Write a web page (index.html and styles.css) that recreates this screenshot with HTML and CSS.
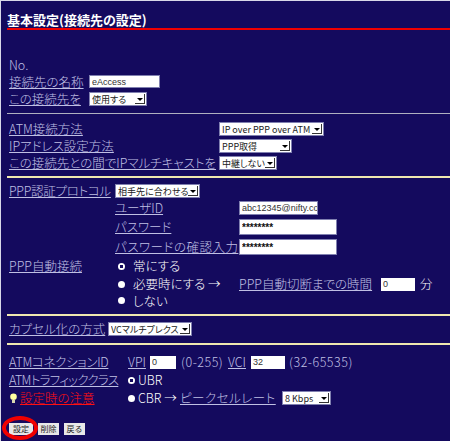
FILE: index.html
```html
<!DOCTYPE html>
<html lang="ja">
<head>
    <meta charset="UTF-8">
    <title>基本設定</title>
    <link rel="stylesheet" href="styles.css">
</head>
<body>
<form class="page">
    <h1 class="title">基本設定(接続先の設定)</h1>
    <div class="line-red"></div>

    <div class="block-no">
        <div class="row"><span class="plain">No.</span></div>
        <div class="row">
            <a class="label w-name">接続先の名称</a>
            <input class="field f-name" type="text" value="eAccess">
        </div>
        <div class="row">
            <a class="label w-name">この接続先を</a>
            <span class="sel s-use"><select><option>使用する</option></select><i class="arrow"></i></span>
        </div>
    </div>
    <div class="line-gray"></div>

    <div class="block-atm">
        <div class="row">
            <a class="label w-atm">ATM接続方法</a>
            <span class="sel s-atm"><select><option>IP over PPP over ATM</option></select><i class="arrow"></i></span>
        </div>
        <div class="row">
            <a class="label w-atm">IPアドレス設定方法</a>
            <span class="sel s-ip"><select><option>PPP取得</option></select><i class="arrow"></i></span>
        </div>
        <div class="row">
            <a class="label w-atm">この接続先との間でIPマルチキャストを</a>
            <span class="sel s-multi"><select><option>中継しない</option></select><i class="arrow"></i></span>
        </div>
    </div>
    <div class="line-cream"></div>

    <div class="block-ppp">
        <div class="row r-16">
            <a class="label w-ppp tight">PPP認証プロトコル</a>
            <span class="sel s-auth"><select><option>相手先に合わせる</option></select><i class="arrow"></i></span>
        </div>
        <div class="row r-18 in-ppp">
            <a class="label w-user">ユーザID</a>
            <input class="field f-user" type="text" value="abc12345@nifty.com">
        </div>
        <div class="row r-20 in-ppp">
            <a class="label w-user">パスワード</a>
            <input class="field f-pw" type="text" value="********">
        </div>
        <div class="row r-20 in-ppp">
            <a class="label w-user wide">パスワードの確認入力</a>
            <input class="field f-pw" type="text" value="********">
        </div>
        <div class="row r-18">
            <a class="label w-auto">PPP自動接続</a>
            <span class="radio on"></span><span class="plain bright">常にする</span>
        </div>
        <div class="row r-18 in-auto">
            <span class="radio"></span><span class="plain bright w-need">必要時にする →</span>
            <a class="label w-cut">PPP自動切断までの時間</a>
            <input class="field f-min" type="text" value="0">
            <span class="plain bright fun">分</span>
        </div>
        <div class="row r-15 in-auto">
            <span class="radio"></span><span class="plain bright">しない</span>
        </div>
    </div>
    <div class="line-cream l-cap"></div>

    <div class="block-cap">
        <div class="row">
            <a class="label w-cap">カプセル化の方式</a>
            <span class="sel s-cap"><select><option>VCマルチプレクス</option></select><i class="arrow"></i></span>
        </div>
    </div>
    <div class="line-cream l-cap"></div>

    <div class="block-conn">
        <div class="row r-18">
            <a class="label w-conn tight">ATMコネクションID</a>
            <a class="label w-vpi">VPI</a>
            <input class="field f-vpi" type="text" value="0">
            <span class="plain w-range wide">(0-255)</span>
            <a class="label w-vci">VCI</a>
            <input class="field f-vci" type="text" value="32">
            <span class="plain range2 wide">(32-65535)</span>
        </div>
        <div class="row r-18">
            <a class="label w-conn tighter">ATMトラフィッククラス</a>
            <span class="radio on r-cls"></span><span class="plain bright">UBR</span>
        </div>
        <div class="row r-18">
            <span class="note w-conn">
                <svg class="bulb" width="9" height="10" viewBox="0 0 9 10"><circle cx="4.5" cy="3.8" r="3.3" fill="#ffffa0"/><rect x="3" y="7" width="3" height="3" fill="#d8d8b0"/></svg>
                <a class="warn">設定時の注意</a>
            </span>
            <span class="radio r-cls"></span><span class="plain bright w-cbr">CBR →</span>
            <a class="label w-peak wide">ピークセルレート</a>
            <span class="sel s-rate"><select><option>8 Kbps</option></select><i class="arrow"></i></span>
        </div>
    </div>

    <div class="buttons">
        <button class="btn btn-set" type="button">設定</button>
        <button class="btn" type="button">削除</button>
        <button class="btn" type="button">戻る</button>
        <span class="circle"></span>
    </div>
</form>
</body>
</html>
```

FILE: styles.css
```css
* {
    margin: 0;
    padding: 0;
    box-sizing: border-box;
}

html, body {
    height: 100%;
    overflow: hidden;
}

body {
    background: #140a5e;
    border-top: 1px solid #d8d8e8;
    border-left: 1px solid #d8d8e8;
    color: #c0c0e4;
    font-family: "Noto Sans CJK JP", "Liberation Sans", sans-serif;
    font-size: 12.5px;
    font-weight: 300;
    line-height: 14px;
    font-feature-settings: "palt";
}

.page {
    padding-left: 6px;
}

.title {
    color: #fff;
    font-size: 13px;
    font-weight: bold;
    height: 27px;
    line-height: 14px;
    padding-top: 12px;
    white-space: nowrap;
}

/* lines */
.line-red {
    height: 2px;
    background: #f00000;
}

.line-gray {
    height: 1px;
    background: #b0b0c0;
    margin-top: 6px;
}

.line-cream {
    height: 2px;
    background: #f0e8b0;
    margin-top: 5px;
}

.l-cap {
    margin-top: 6px;
}

/* blocks */
.block-no {
    padding-left: 2px;
    margin-top: 26px;
}

.block-atm {
    padding-left: 2px;
    margin-top: 6px;
}

.block-ppp {
    padding-left: 2px;
    margin-top: 5px;
}

.block-cap {
    padding-left: 2px;
    margin-top: 4px;
}

.block-conn {
    padding-left: 2px;
    margin-top: 8px;
}

.row {
    display: flex;
    align-items: center;
    height: 17px;
    white-space: nowrap;
}

.r-15 { height: 15px; }
.r-16 { height: 16px; }
.r-18 { height: 18px; }
.r-20 { height: 20px; }

.in-ppp { padding-left: 106px; }
.in-auto { padding-left: 109px; }

/* text */
.label {
    color: #c0c0e4;
    text-decoration: underline;
    flex: none;
}

.plain {
    flex: none;
}

.bright {
    color: #fff;
}

.warn {
    color: #ff1010;
    text-decoration: underline;
}

.note {
    display: flex;
    align-items: center;
    gap: 2px;
}

.bulb {
    flex: none;
}

/* letter spacing, reference font is narrower or wider in places */
.tight { letter-spacing: -0.3px; }
.tighter { letter-spacing: -0.7px; }
.wide { letter-spacing: 0.5px; }

/* column widths */
.w-name { width: 80px; }
.w-atm { width: 210px; }
.w-ppp { width: 106px; }
.w-user { width: 124px; }
.w-auto { width: 109px; }
.w-need { width: 106px; }
.w-cut { width: 142px; }
.w-cap { width: 99px; }
.w-conn { width: 119px; }
.w-vpi { width: 22px; }
.w-range { width: 47px; margin-left: 5px; }
.w-vci { width: 23px; }
.w-cbr { width: 42px; }
.w-peak { width: 102px; }
.range2 { margin-left: 4px; }
.fun { margin-left: 5px; }

/* form controls */
.field {
    display: block;
    flex: none;
    height: 13px;
    border: 1px solid #8080b0;
    background: #fff;
    color: #333;
    font-family: "Liberation Sans", "Noto Sans CJK JP", sans-serif;
    font-size: 9px;
    padding-left: 2px;
    outline: none;
}

.f-name { width: 71px; }
.f-user { width: 79px; height: 14px; }
.f-pw { width: 98px; height: 16px; color: #111; font-size: 10px; font-weight: bold; }
.f-min { width: 34px; border: 0; }
.f-vpi { width: 26px; border: 0; }
.f-vci { width: 34px; border: 0; }

.sel {
    display: block;
    flex: none;
    position: relative;
    height: 14px;
}

.sel select {
    appearance: none;
    display: block;
    width: 100%;
    height: 100%;
    border: 1px solid #8080b0;
    border-radius: 0;
    background: #fff;
    color: #222;
    font-family: "Noto Sans CJK JP", "Liberation Sans", sans-serif;
    font-size: 9px;
    font-feature-settings: "palt";
    padding-left: 2px;
}

.arrow {
    position: absolute;
    right: 2px;
    top: 2px;
    width: 10px;
    height: 10px;
    border-right: 1px solid #333;
    border-bottom: 1px solid #333;
}

.arrow::after {
    content: "";
    position: absolute;
    left: 2px;
    top: 4px;
    border-top: 3px solid #000;
    border-left: 3px solid transparent;
    border-right: 3px solid transparent;
}

.s-use { width: 58px; }
.s-atm { width: 105px; }
.s-ip { width: 73px; }
.s-multi { width: 58px; }
.s-auth { width: 85px; }
.s-cap { width: 84px; }
.s-rate { width: 49px; }

.radio {
    flex: none;
    width: 7px;
    height: 7px;
    border-radius: 50%;
    background: #fff;
    margin-right: 8px;
}

.radio.on {
    background: radial-gradient(circle, #140a5e 0 1.5px, #fff 2px);
}

.r-cls {
    margin-right: 3px;
}

/* buttons */
.buttons {
    display: flex;
    gap: 5px;
    position: relative;
    padding-left: 2px;
    margin-top: 16px;
}

.btn {
    width: 21px;
    height: 12px;
    border: 0;
    background: #e8e8e8;
    color: #222;
    font-family: "Noto Sans CJK JP", sans-serif;
    font-size: 8px;
    line-height: 12px;
}

.btn-set {
    width: 24px;
}

.circle {
    position: absolute;
    left: -5px;
    top: -7px;
    width: 36px;
    height: 24px;
    border: 4px solid #f00000;
    border-radius: 50%;
}
```
